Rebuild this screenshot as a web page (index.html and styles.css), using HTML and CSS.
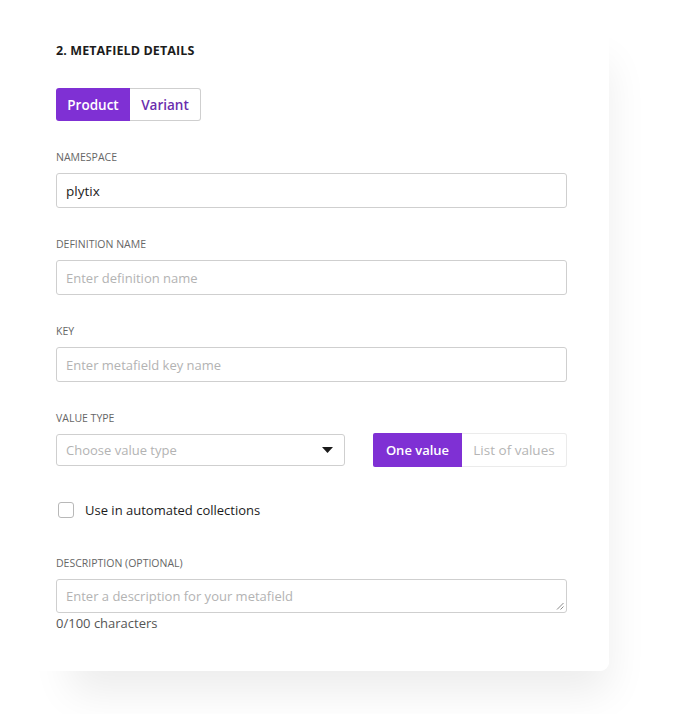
FILE: index.html
```html
<!DOCTYPE html>
<html>
<head>
<meta charset="utf-8">
<link rel="stylesheet" href="styles.css">
</head>
<body>
<div class="card">
  <h2 class="title">2. METAFIELD DETAILS</h2>
  <div class="toggle">
    <span class="seg seg-on">Product</span>
    <span class="seg seg-off">Variant</span>
  </div>

  <div class="field">
    <div class="label">NAMESPACE</div>
    <div class="input"><span class="val">plytix</span></div>
  </div>
  <div class="field">
    <div class="label">DEFINITION NAME</div>
    <div class="input"><span class="ph">Enter definition name</span></div>
  </div>
  <div class="field">
    <div class="label">KEY</div>
    <div class="input"><span class="ph">Enter metafield key name</span></div>
  </div>
  <div class="field">
    <div class="label">VALUE TYPE</div>
    <div class="value-row">
      <div class="select">
        <span class="ph">Choose value type</span>
        <svg class="caret" width="11" height="6" viewBox="0 0 11 6"><path d="M0 0 H11 L5.5 6 Z" fill="#1a1a1a"/></svg>
      </div>
      <div class="seg2">
        <span class="s2 s2-on">One value</span>
        <span class="s2 s2-off">List of values</span>
      </div>
    </div>
  </div>

  <label class="check">
    <span class="box"></span>
    <span class="check-text">Use in automated collections</span>
  </label>

  <div class="field desc">
    <div class="label">DESCRIPTION (OPTIONAL)</div>
    <div class="textarea">
      <span class="ph">Enter a description for your metafield</span>
      <svg class="grip" width="8" height="8" viewBox="0 0 8 8"><path d="M7.5 1 L1 7.5 M7.5 4.5 L4.5 7.5" stroke="#8a8a8a" stroke-width="1" fill="none"/></svg>
    </div>
    <div class="counter">0/100 characters</div>
  </div>
</div>
</body>
</html>
```

FILE: styles.css
```css
html, body {
  margin: 0;
  padding: 0;
  background: #ffffff;
}
body {
  font-family: "Open Sans", "Noto Sans", "Liberation Sans", sans-serif;
  color: #222;
  width: 688px;
  height: 714px;
  overflow: hidden;
}
.card {
  position: relative;
  z-index: 0;
  box-sizing: border-box;
  width: 609px;
  height: 671px;
  border-radius: 0 0 9px 0;
  padding: 42px 0 0 56px;
}
.card::after {
  content: "";
  position: absolute;
  left: 70px;
  right: 0;
  top: 40px;
  bottom: 0;
  z-index: -2;
  border-radius: 9px;
  box-shadow: 0 22px 40px rgba(0, 0, 0, 0.075);
}
.card::before {
  content: "";
  position: absolute;
  inset: 0;
  z-index: -1;
  background: #fff;
  border-radius: 0 0 9px 0;
}
.title {
  margin: 0;
  font-size: 12.5px;
  line-height: 18px;
  font-weight: 700;
  color: #1c1c1c;
  letter-spacing: 0.1px;
}
.toggle {
  display: flex;
  margin-top: 28px;
  height: 33px;
  width: 145px;
}
.seg {
  display: flex;
  align-items: center;
  justify-content: center;
  box-sizing: border-box;
  font-size: 13.5px;
  font-weight: 600;
}
.seg-on {
  width: 74px;
  background: #7f30d4;
  color: #fff;
  border-radius: 3px 0 0 3px;
}
.seg-off {
  width: 71px;
  border: 1px solid #cfcfcf;
  border-left: none;
  border-radius: 0 3px 3px 0;
  color: #6a2eae;
}
.field {
  margin-top: 29px;
  width: 511px;
}
.label {
  font-size: 10.5px;
  line-height: 15px;
  color: #666;
  margin-bottom: 8px;
}
.input {
  box-sizing: border-box;
  height: 35px;
  border: 1px solid #cfcfcf;
  border-radius: 3px;
  display: flex;
  align-items: center;
  padding-left: 9px;
  font-size: 13px;
  background: #fff;
}
.val { color: #1c1c1c; font-size: 13.5px; }
.ph { color: #b3b3b3; font-size: 13px; }
.value-row {
  display: flex;
  align-items: center;
  justify-content: space-between;
  margin-top: -1px;
}
.select {
  box-sizing: border-box;
  width: 289px;
  height: 32px;
  border: 1px solid #cfcfcf;
  border-radius: 3px;
  display: flex;
  align-items: center;
  justify-content: space-between;
  padding: 0 11px 0 9px;
}
.seg2 {
  display: flex;
  height: 34px;
  width: 194px;
}
.s2 {
  display: flex;
  align-items: center;
  justify-content: center;
  box-sizing: border-box;
  font-size: 13px;
}
.s2-on {
  width: 89px;
  background: #7f30d4;
  color: #fff;
  font-weight: 600;
  border-radius: 2px 0 0 2px;
}
.s2-off {
  width: 105px;
  border: 1px solid #ebebeb;
  border-left: none;
  border-radius: 0 3px 3px 0;
  color: #b5b5b5;
  font-size: 13.5px;
}
.check {
  display: flex;
  align-items: center;
  height: 20px;
  margin-top: 33px;
  padding-left: 2px;
}
.box {
  box-sizing: border-box;
  width: 16px;
  height: 16px;
  border: 1.5px solid #b8b8b8;
  border-radius: 3px;
}
.check-text {
  margin-left: 11px;
  font-size: 13px;
  color: #1c1c1c;
}
.desc { margin-top: 36px; }
.textarea {
  position: relative;
  box-sizing: border-box;
  height: 34px;
  border: 1px solid #cfcfcf;
  border-radius: 3px;
  display: flex;
  align-items: center;
  padding-left: 9px;
}
.grip {
  position: absolute;
  right: 2px;
  bottom: 2px;
}
.counter {
  margin-top: 1px;
  font-size: 13px;
  line-height: 18px;
  color: #555;
}
```
